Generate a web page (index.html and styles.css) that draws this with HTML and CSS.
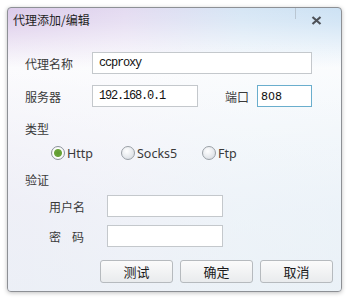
FILE: index.html
```html
<!DOCTYPE html>
<html lang="zh-CN">
<head>
    <meta charset="UTF-8">
    <title>代理添加/编辑</title>
    <link rel="stylesheet" href="styles.css">
</head>
<body>
    <div class="dialog">
        <div class="titlebar">
            <span class="title">代理添加/编辑</span>
            <span class="close">
                <svg width="11" height="9" viewBox="0 0 11 9">
                    <path d="M1.5 1 L9.5 8 M9.5 1 L1.5 8" stroke="#4e5258" stroke-width="2.2" fill="none"/>
                </svg>
            </span>
        </div>

        <div class="content">
            <div class="row row-name">
                <label class="label">代理名称</label>
                <div class="field field-name mono">ccproxy</div>
            </div>

            <div class="row row-server">
                <label class="label">服务器</label>
                <div class="field field-server mono">192.168.0.1</div>
                <label class="label-port">端口</label>
                <div class="field field-port focused">808</div>
            </div>

            <div class="section">类型</div>
            <div class="radios">
                <span class="option opt-http"><span class="radio checked"></span>Http</span>
                <span class="option opt-socks"><span class="radio"></span>Socks5</span>
                <span class="option"><span class="radio"></span>Ftp</span>
            </div>

            <div class="section section-auth">验证</div>
            <div class="row row-user">
                <label class="sublabel">用户名</label>
                <div class="field field-auth"></div>
            </div>
            <div class="row row-pass">
                <label class="sublabel">密<span class="sp"></span>码</label>
                <div class="field field-auth"></div>
            </div>

            <div class="buttons">
                <button class="btn">测试</button>
                <button class="btn">确定</button>
                <button class="btn">取消</button>
            </div>
        </div>
    </div>
</body>
</html>
```

FILE: styles.css
```css
body {
    margin: 0;
    padding: 7px;
    background: #ffffff;
    font-family: "Noto Sans CJK SC", "Liberation Sans", sans-serif;
    font-size: 12px;
    color: #333;
}

.dialog {
    width: 333px;
    height: 283px;
    border: 1px solid #8d9095;
    border-radius: 4px;
    box-shadow: 0 1px 4px rgba(0, 0, 0, 0.25);
    background:
        linear-gradient(to bottom, rgba(255, 255, 255, 0) 0, rgba(255, 255, 255, 0.15) 14px, rgba(255, 255, 255, 0.95) 60px, rgba(255, 255, 255, 0.7) 200px),
        linear-gradient(to right, #dccbea 0, #e4dbf1 35%, #d6e6f5 70%, #cde2f4 100%);
    background-color: #f4f7fa;
    overflow: hidden;
}

.titlebar {
    display: flex;
    align-items: center;
    height: 24px;
    padding-left: 5px;
}

.title {
    flex: 1;
    font-size: 12px;
    color: #1e1e1e;
    line-height: 24px;
}

.close {
    display: flex;
    align-items: center;
    justify-content: center;
    width: 46px;
    height: 24px;
    align-self: flex-start;
    position: relative;
}

.close::before {
    content: "";
    position: absolute;
    left: 0;
    top: 0;
    height: 11px;
    border-left: 1px solid #b9c6d2;
}

.close svg {
    margin-left: -3px;
    margin-top: 1px;
}

.content {
    padding: 0 8px 0 17px;
    background: linear-gradient(to bottom, rgba(255, 255, 255, 0), rgba(232, 239, 245, 0.7));
    height: 259px;
    box-sizing: border-box;
}

.row {
    display: flex;
    align-items: center;
}

.row-name {
    padding-top: 20px;
}

.row-server {
    margin-top: 11px;
}

.label {
    width: 67px;
    color: #3a3a3a;
}

.label-port {
    margin-left: 27px;
    width: 32px;
    color: #3a3a3a;
}

.field {
    height: 22px;
    box-sizing: border-box;
    border: 1px solid #c4c8cc;
    background: #fff;
    padding-left: 6px;
    line-height: 20px;
}

.mono {
    font-family: "Liberation Mono", monospace;
    font-size: 12px;
    letter-spacing: -1.2px;
    color: #111;
}

.field-name {
    width: 220px;
}

.field-server {
    width: 106px;
}

.field-port {
    width: 55px;
    font-family: "DejaVu Sans", sans-serif;
    font-size: 11px;
    color: #111;
    padding-left: 3px;
    padding-top: 1px;
}

.focused {
    border-color: #6aaecd;
}

.section {
    margin-top: 14px;
    height: 16px;
    line-height: 16px;
    color: #3a3a3a;
}

.section-auth {
    margin-top: 11px;
}

.radios {
    display: flex;
    align-items: center;
    margin-top: 8px;
    padding-left: 26px;
    height: 16px;
    font-family: "Noto Sans", sans-serif;
    font-size: 12.5px;
    color: #3a3a3a;
}

.option {
    display: flex;
    align-items: center;
}

.opt-http {
    width: 70px;
}

.opt-socks {
    width: 81px;
}

.radio {
    width: 12px;
    height: 12px;
    border: 1px solid #9aa0a6;
    border-radius: 50%;
    background: radial-gradient(circle at 40% 35%, #ffffff, #dfe3e8 70%, #cdd3da);
    margin-right: 2px;
    position: relative;
}

.radio.checked {
    background: radial-gradient(circle, #5f9a31 0, #6ba53a 3.5px, #ffffff 4.5px, #e4e8ec 100%);
    border-color: #8a9198;
}

.row-user {
    margin-top: 7px;
}

.row-pass {
    margin-top: 8px;
}

.sublabel {
    width: 58px;
    padding-left: 24px;
    color: #3a3a3a;
    display: flex;
}

.sp {
    width: 11px;
}

.field-auth {
    width: 116px;
}

.buttons {
    display: flex;
    justify-content: flex-end;
    gap: 7px;
    margin-top: 13px;
}

.btn {
    width: 73px;
    height: 23px;
    border: 1px solid #b6babe;
    border-radius: 3px;
    background: linear-gradient(to bottom, #fbfbfb, #e9ebed);
    font-family: "Noto Sans CJK SC", sans-serif;
    font-size: 13px;
    color: #1a1a1a;
    padding: 0;
    line-height: 20px;
}
```
